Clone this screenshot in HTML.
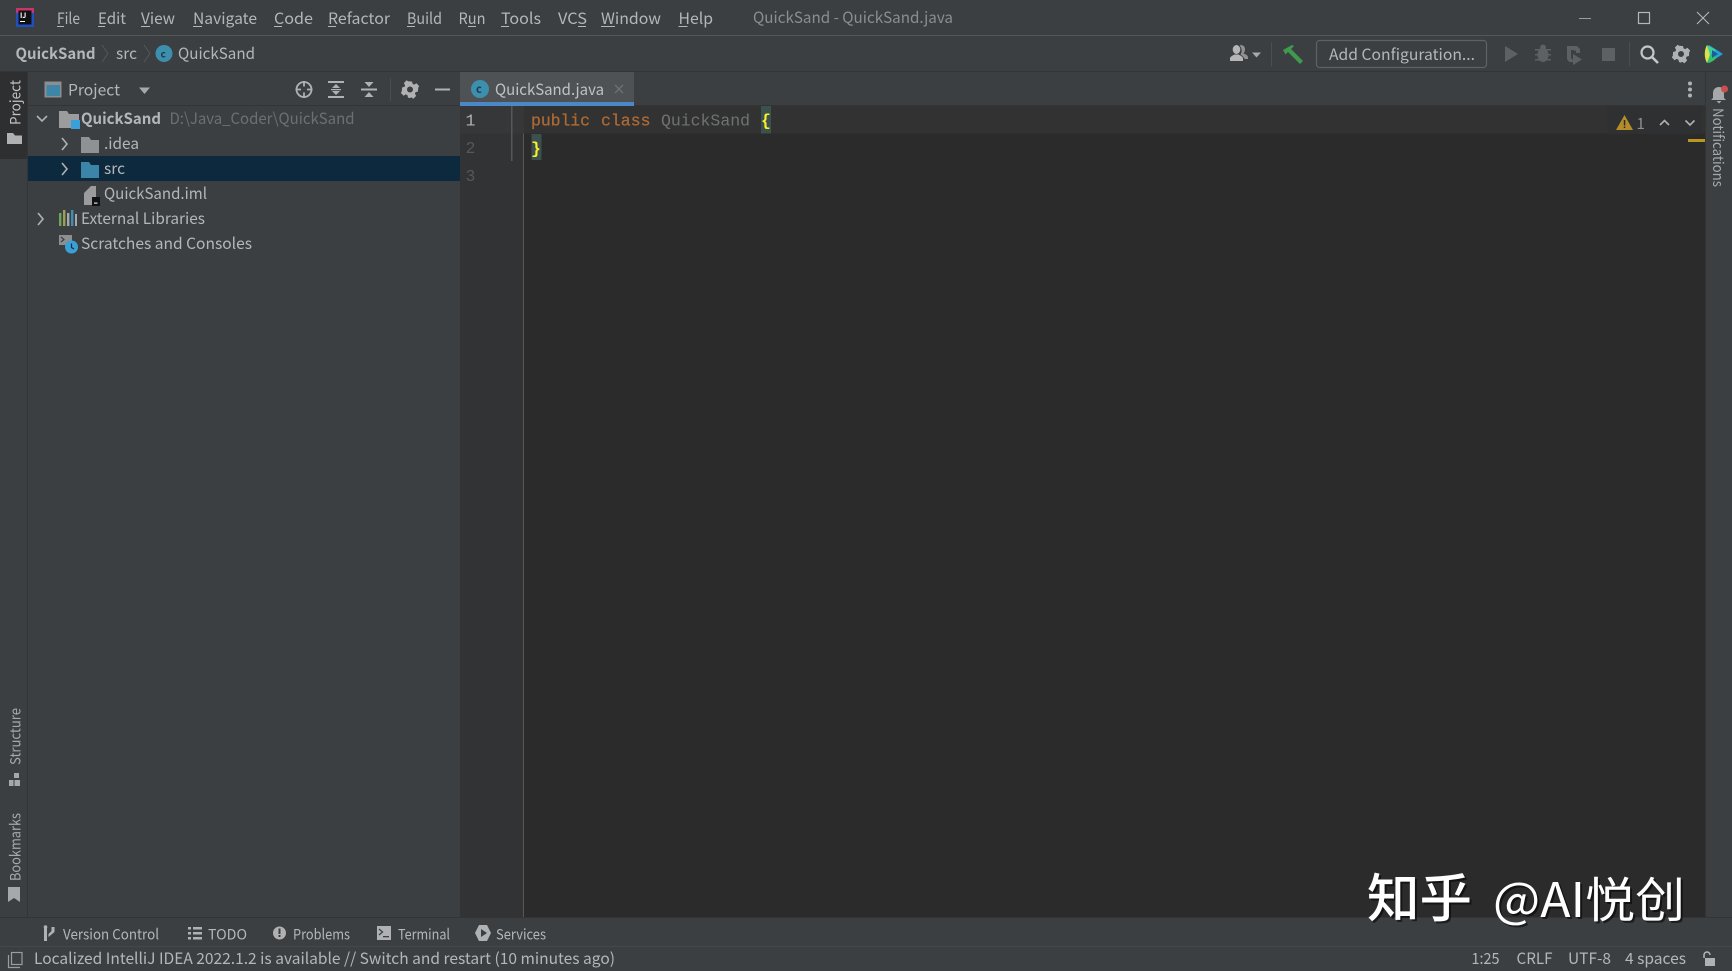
<!DOCTYPE html>
<html lang="en">
<head>
<meta charset="utf-8">
<title>QuickSand - QuickSand.java</title>
<style>
html,body{margin:0;padding:0;width:1732px;height:971px;overflow:hidden;background:#3c3f41}
svg{display:block}
text{font-family:"Noto Sans CJK SC","Liberation Sans",sans-serif;font-size:15.5px;fill:#b4b6b8}
.m{font-family:"Liberation Mono",monospace;font-size:16.5px}
.s{font-size:14.5px}
.g{fill:#a6a8aa}
.b{font-weight:700}
.ic{fill:#afb1b3}
.dim{fill:#5d6163}
.ln{stroke:#afb1b3;fill:none;stroke-width:1.6}
</style>
</head>
<body>
<svg width="1732" height="971" viewBox="0 0 1732 971" xmlns="http://www.w3.org/2000/svg">
<defs>
<g id="gear"><path fill="#afb1b3" fill-rule="evenodd" d="M-2-8h4l.6 2.4 1.7.7 2.1-1.3 2.8 2.8-1.3 2.1.7 1.7L8-2V2l-2.4.6-.7 1.7 1.3 2.1-2.8 2.8-2.1-1.3-1.7.7L-2 8h-0V8l-.6-2.4-1.7-.7-2.1 1.3-2.8-2.8 1.3-2.1-.7-1.7L-8 2V-2l2.4-.6.7-1.7-1.3-2.1 2.8-2.8 2.1 1.3 1.7-.7zM0-3a3 3 0 1 0 0 6 3 3 0 0 0 0-6z"/></g>
<g id="folder"><path d="M0 0h8l2 3h8v13H0z"/></g>
</defs>

<!-- base -->
<rect width="1732" height="971" fill="#3c3f41"/>
<rect x="0" y="35" width="1732" height="1" fill="#54575a"/>
<rect x="0" y="71" width="1732" height="1" fill="#323436"/>

<!-- title bar -->
<rect x="16" y="8" width="18" height="19" fill="#1f4fc0"/>
<rect x="16" y="8" width="18" height="5" fill="#c8356a"/>
<rect x="18.500" y="10.500" width="13" height="14" fill="#111"/>
<text x="20" y="18" style="font-size:7px;fill:#fff;font-weight:700">IJ</text>
<rect x="20" y="21" width="5" height="1" fill="#fff"/>
<g>
<text x="57" y="24" textLength="23" lengthAdjust="spacingAndGlyphs">File</text>
<text x="98" y="24" textLength="28" lengthAdjust="spacingAndGlyphs">Edit</text>
<text x="141" y="24" textLength="34" lengthAdjust="spacingAndGlyphs">View</text>
<text x="193" y="24" textLength="64" lengthAdjust="spacingAndGlyphs">Navigate</text>
<text x="274" y="24" textLength="39" lengthAdjust="spacingAndGlyphs">Code</text>
<text x="328" y="24" textLength="62" lengthAdjust="spacingAndGlyphs">Refactor</text>
<text x="407" y="24" textLength="35" lengthAdjust="spacingAndGlyphs">Build</text>
<text x="458.500" y="24" textLength="27" lengthAdjust="spacingAndGlyphs">Run</text>
<text x="501" y="24" textLength="40" lengthAdjust="spacingAndGlyphs">Tools</text>
<text x="558" y="24" textLength="29" lengthAdjust="spacingAndGlyphs">VCS</text>
<text x="601" y="24" textLength="60" lengthAdjust="spacingAndGlyphs">Window</text>
<text x="678.500" y="24" textLength="34.500" lengthAdjust="spacingAndGlyphs">Help</text>
<text x="753" y="23" textLength="200" lengthAdjust="spacingAndGlyphs" style="fill:#8b8d8f">QuickSand - QuickSand.java</text>
</g>
<g fill="#b4b6b8">
<rect x="57" y="26" width="7" height="1"/><rect x="98" y="26" width="7" height="1"/><rect x="141" y="26" width="9" height="1"/><rect x="193" y="26" width="9" height="1"/><rect x="274" y="26" width="8" height="1"/><rect x="328" y="26" width="8" height="1"/><rect x="407" y="26" width="8" height="1"/><rect x="468" y="26" width="8" height="1"/><rect x="501" y="26" width="8" height="1"/><rect x="578" y="26" width="8" height="1"/><rect x="601" y="26" width="14" height="1"/><rect x="678.500" y="26" width="9" height="1"/>
</g>
<rect x="1579" y="18" width="12" height="1" fill="#9a9c9e"/>
<rect x="1638.500" y="12.500" width="11" height="11" fill="none" stroke="#b4b6b8" stroke-width="1.200"/>
<path d="M1697 12l12 12M1709 12l-12 12" stroke="#b4b6b8" stroke-width="1.100" fill="none"/>

<!-- navigation bar -->
<text x="15.500" y="59" class="b" textLength="80" lengthAdjust="spacingAndGlyphs">QuickSand</text>
<path d="M102 45l6 8.500-6 8.500" class="ln" style="stroke:#55585a;stroke-width:1"/>
<text x="116" y="59" textLength="21" lengthAdjust="spacingAndGlyphs">src</text>
<path d="M144 45l6 8.500-6 8.500" class="ln" style="stroke:#55585a;stroke-width:1"/>
<circle cx="164" cy="53.500" r="8.500" fill="#3d8fae"/>
<text x="160.500" y="57.500" style="font-size:10px;fill:#1e3d4d;font-weight:700">c</text>
<text x="178" y="59" textLength="77" lengthAdjust="spacingAndGlyphs">QuickSand</text>

<!-- user icon -->
<path d="M1241 45a4 4 0 0 1 4 4.500c0 1.500-.7 3-1.500 4 2 .8 4.500 1.500 4.500 4v1.500h-3.500c-.5-2-2.500-3.500-4-4.500 1-1.500 1.500-3.500 1-5.500-.2-1-.7-2-1.500-3 .2-.8.5-1 1-1.500z" fill="#8f9193"/>
<ellipse cx="1236.500" cy="49.500" rx="3.800" ry="4.500" fill="#b4b6b8"/>
<path d="M1230 61v-2.500c0-2 3-3 4.500-4h4c1.500 1 4.500 2 4.500 4v2.500z" fill="#b4b6b8"/>
<path d="M1252 52.500h9l-4.500 5z" fill="#a6a8aa"/>
<rect x="1271" y="42" width="1" height="24" fill="#4b4e50"/>
<!-- hammer -->
<path d="M1283 50l9-5 2 1-3 3 12 12-3 3-12-12-2.500 2.500z" fill="#3f9a4f"/>
<!-- add config -->
<rect x="1316.500" y="40.500" width="170" height="27" rx="3" fill="#3c3f41" stroke="#5e6265" stroke-width="1.200"/>
<text x="1329" y="60" textLength="146" lengthAdjust="spacingAndGlyphs">Add Configuration...</text>
<!-- disabled run icons -->
<path d="M1505 46l13 8-13 8z" fill="#5d6163"/>
<g fill="#5d6163"><ellipse cx="1543" cy="55" rx="5.500" ry="7"/><circle cx="1543" cy="47.500" r="3"/><path d="M1535 49h16v1.500h-16zM1535 54h16v1.500h-16zM1535 59h16v1.500h-16z"/></g>
<path d="M1567 46h10l3 3v4h-4v-2l-3-1h-2v8l2 2v2h-4l-2-3zM1573 54l9 5.500-9 5.500z" fill="#5d6163"/>
<rect x="1602" y="48" width="13" height="13" fill="#5d6163"/>
<rect x="1629" y="42" width="1" height="24" fill="#4b4e50"/>
<!-- search -->
<circle cx="1647.500" cy="52.500" r="6" fill="none" stroke="#c4c6c8" stroke-width="2.200"/>
<path d="M1652 57l6 6" stroke="#c4c6c8" stroke-width="2.600"/>
<use href="#gear" x="1681" y="54"/>
<!-- logo -->
<path d="M1709 45l14 9-14 9-3-8z" fill="#22a0e0"/>
<path d="M1707 45l9 5-6 5z" fill="#3dcf9a"/>
<path d="M1707 45c-3 5-3 13 0 18l3-8z" fill="#d9e24c"/>
<path d="M1707 63c4 0 8-3 10-6l-7-2z" fill="#35c06a"/>
<path d="M1712 50l6 4-6 4z" fill="#1a5f90"/>

<!-- left stripe -->
<rect x="0" y="72" width="27" height="87" fill="#2d2f30"/>
<rect x="27" y="72" width="1" height="845" fill="#323436"/>
<text x="0" y="0" class="s" transform="translate(20.500,125) rotate(-90)" textLength="45" lengthAdjust="spacingAndGlyphs" style="fill:#c0c2c4">Project</text>
<path d="M7 133h6l2 2.500h7V144H7z" fill="#afb1b3"/>
<text x="0" y="0" class="s g" transform="translate(20.500,765) rotate(-90)" textLength="57" lengthAdjust="spacingAndGlyphs">Structure</text>
<path d="M14 773h5v5h-5zM9 780h4.500v6H9zM14.500 780H20v6h-5.500z" fill="#a6a8aa"/>
<text x="0" y="0" class="s g" transform="translate(20.500,881) rotate(-90)" textLength="68" lengthAdjust="spacingAndGlyphs">Bookmarks</text>
<path d="M8 887h12v15l-6-4-6 4z" fill="#a6a8aa"/>

<!-- project header -->
<rect x="44.500" y="81.500" width="17" height="16" fill="#8c8e90"/>
<rect x="46.500" y="85" width="13.500" height="11" fill="#3d86a8"/>
<text x="68" y="95.500" textLength="52" lengthAdjust="spacingAndGlyphs">Project</text>
<path d="M139 87.500h11l-5.500 6.500z" fill="#a6a8aa"/>
<circle cx="304" cy="89.500" r="7.500" fill="none" stroke="#afb1b3" stroke-width="1.800"/>
<path d="M304 81v5.500M304 92.500V98M295.500 89.500h5.500M307 89.500h5.500" stroke="#afb1b3" stroke-width="1.800"/>
<g fill="#afb1b3"><rect x="328" y="81" width="16" height="2"/><rect x="328" y="96" width="16" height="2"/><path d="M336 84l-4 4h8zM336 95l-4-4h8z"/><rect x="331" y="89" width="10" height="1.200"/></g>
<g fill="#afb1b3"><rect x="361" y="88.500" width="16" height="2"/><path d="M369 87l-4.500-5h9zM369 92l-4.500 5h9z"/></g>
<rect x="390" y="78" width="1" height="23" fill="#4b4e50"/>
<use href="#gear" x="410" y="89.500"/>
<rect x="435" y="88.500" width="15" height="2" fill="#afb1b3"/>
<rect x="28" y="105" width="432" height="1" fill="#323436"/>

<!-- tree -->
<rect x="28" y="156" width="432" height="25" fill="#0d293e"/>
<path d="M37 116l5 5 5-5" class="ln"/>
<path d="M62 138l5 6-5 6" class="ln"/>
<path d="M62 163l5 6-5 6" class="ln"/>
<path d="M38 213l5 6-5 6" class="ln"/>
<path d="M59 111h8l2 3h10v14H59z" fill="#9a9c9e"/>
<rect x="71" y="120" width="9" height="9" fill="#3aa0d8"/>
<text x="81" y="124" class="b" textLength="80" lengthAdjust="spacingAndGlyphs">QuickSand</text>
<text x="169.500" y="124" textLength="185" lengthAdjust="spacingAndGlyphs" style="fill:#6d7072">D:\Java_Coder\QuickSand</text>
<g fill="#8f9294" transform="translate(81,137)"><use href="#folder"/></g>
<text x="104" y="149" textLength="35" lengthAdjust="spacingAndGlyphs">.idea</text>
<g fill="#3a85a8" transform="translate(81,162)"><use href="#folder"/></g>
<text x="104" y="174" textLength="21" lengthAdjust="spacingAndGlyphs">src</text>
<path d="M84 193l7-7h5v14h-3v5h-9z" fill="#9a9c9e"/>
<rect x="92" y="197" width="8" height="9" fill="#111"/><rect x="94" y="202.500" width="3.500" height="1.200" fill="#ddd"/>
<text x="104" y="199" textLength="103" lengthAdjust="spacingAndGlyphs">QuickSand.iml</text>
<g><rect x="59" y="213" width="2.400" height="13" fill="#6fa55a"/><rect x="63" y="210" width="2.400" height="16" fill="#9aa05a"/><rect x="67" y="213" width="2.400" height="13" fill="#a6a8aa"/><rect x="71" y="210" width="2.400" height="16" fill="#3f8fb8"/><rect x="75" y="214" width="2" height="12" fill="#a6a8aa"/></g>
<text x="81" y="224" textLength="124" lengthAdjust="spacingAndGlyphs">External Libraries</text>
<rect x="59" y="235" width="13" height="10" fill="#8c8e90"/>
<path d="M61 237l3 2.500-3 2.500" stroke="#3c3f41" fill="none" stroke-width="1.200"/>
<circle cx="71.500" cy="247" r="6.500" fill="#3aa0d8"/>
<path d="M71.500 243.500v4l2.500 1.500" stroke="#0f2f44" fill="none" stroke-width="1.200"/>
<text x="81" y="249" textLength="171" lengthAdjust="spacingAndGlyphs">Scratches and Consoles</text>

<!-- editor -->
<rect x="460" y="106" width="1245" height="811" fill="#2b2b2b"/>
<rect x="460" y="106" width="64" height="811" fill="#313335"/>
<rect x="523" y="106" width="1" height="811" fill="#555759"/>
<rect x="524" y="106" width="1181" height="27.500" fill="#323232"/>
<rect x="460" y="106" width="64" height="27.500" fill="#353739"/>
<rect x="460" y="72" width="1245" height="34" fill="#3c3f41"/>
<rect x="460" y="105" width="1245" height="1" fill="#323436"/>
<!-- tab -->
<rect x="460" y="72" width="174" height="30" fill="#4e5254"/>
<rect x="460" y="102" width="174" height="4" fill="#4a88c7"/>
<circle cx="480" cy="89" r="9" fill="#3d8fae"/>
<text x="476" y="93" style="font-size:11px;fill:#1e3d4d;font-weight:700">c</text>
<text x="495" y="95" textLength="109" lengthAdjust="spacingAndGlyphs" style="fill:#c0c2c4">QuickSand.java</text>
<path d="M615 85l8 8M623 85l-8 8" stroke="#6e7173" stroke-width="1.300"/>
<circle cx="1690" cy="83.500" r="2" fill="#afb1b3"/><circle cx="1690" cy="89.500" r="2" fill="#afb1b3"/><circle cx="1690" cy="95.500" r="2" fill="#afb1b3"/>
<!-- gutter -->
<text x="465.500" y="125.500" class="m" style="fill:#b0b2b4">1</text>
<text x="465.500" y="153" class="m" style="fill:#55585a">2</text>
<text x="465.500" y="181" class="m" style="fill:#55585a">3</text>
<rect x="511" y="106" width="1.500" height="55" fill="#55585a"/>
<!-- code -->
<text x="531" y="125.700" class="m" style="fill:#ad6a33;stroke:#ad6a33;stroke-width:.25" textLength="59" lengthAdjust="spacing">public</text>
<text x="601" y="125.700" class="m" style="fill:#ad6a33;stroke:#ad6a33;stroke-width:.25" textLength="49.500" lengthAdjust="spacing">class</text>
<text x="661" y="125.700" class="m" style="fill:#6f7173" textLength="89" lengthAdjust="spacing">QuickSand</text>
<rect x="761" y="106" width="10" height="27.500" fill="#3b514d"/>
<text x="761" y="125.700" class="m" style="fill:#ffef28;font-weight:700">{</text>
<rect x="531.500" y="134" width="10" height="26" fill="#3b514d"/>
<text x="531" y="153.500" class="m" style="fill:#ffef28;font-weight:700">}</text>
<!-- inspections -->
<rect x="1607" y="106" width="95" height="28" fill="#2f3031"/>
<path d="M1624.500 115l8.500 15h-17z" fill="#b58c28"/>
<rect x="1623.800" y="120" width="1.500" height="5.500" fill="#2b2b2b"/><rect x="1623.800" y="126.500" width="1.500" height="1.500" fill="#2b2b2b"/>
<text x="1636.500" y="129" style="font-size:15px;fill:#909294">1</text>
<path d="M1660 125l4.500-4.500 4.500 4.500" class="ln"/>
<path d="M1685.500 120.500l4.500 4.500 4.500-4.500" class="ln"/>
<rect x="1688" y="139" width="17" height="3" fill="#b8981f"/>

<!-- right stripe -->
<rect x="1705" y="72" width="27" height="845" fill="#3c3f41"/>
<rect x="1705" y="72" width="1" height="845" fill="#323436"/>
<path d="M1719 87c4 0 5 3 5 6v5l2 2h-15l2-2v-5c0-3 2-6 6-6zM1716.500 101h5l-2.500 2.500z" fill="#a6a8aa"/>
<circle cx="1724.500" cy="89" r="3.500" fill="#c9504f"/>
<text x="0" y="0" class="s g" transform="translate(1713,108) rotate(90)" textLength="79" lengthAdjust="spacingAndGlyphs">Notifications</text>

<!-- bottom tool bar -->
<rect x="0" y="917" width="1732" height="1" fill="#323436"/>
<rect x="0" y="946" width="1732" height="1" fill="#45484a"/>
<g class="ic">
<path d="M44 927h3v14h-3zM51.500 927h3v5l-6 5v-3l3-3z" fill="#afb1b3"/>
<circle cx="45.500" cy="927" r="1.800" fill="#afb1b3"/>
<path d="M188 927h3v2.500h-3zM193 927h9v2.500h-9zM188 932h3v2.500h-3zM193 932h9v2.500h-9zM188 937h3v2.500h-3zM193 937h9v2.500h-9z" fill="#afb1b3"/>
<circle cx="279.500" cy="933" r="6.500" fill="#afb1b3"/>
<rect x="278.500" y="928.500" width="2" height="5.500" fill="#3c3f41"/><rect x="278.500" y="935" width="2" height="2" fill="#3c3f41"/>
<rect x="377" y="926" width="14" height="14" fill="#afb1b3"/>
<path d="M379 929l3.500 3-3.500 3" stroke="#3c3f41" fill="none" stroke-width="1.300"/><rect x="383" y="936" width="6" height="1.300" fill="#3c3f41"/>
<path d="M479 925h8l4 8-4 8h-8l-4-8z" fill="#afb1b3"/>
<path d="M481 929l6 4-6 4z" fill="#3c3f41"/>
</g>
<text x="63" y="939.500" class="s" textLength="96" lengthAdjust="spacingAndGlyphs">Version Control</text>
<text x="208" y="939.500" class="s" textLength="39" lengthAdjust="spacingAndGlyphs">TODO</text>
<text x="293" y="939.500" class="s" textLength="57" lengthAdjust="spacingAndGlyphs">Problems</text>
<text x="398" y="939.500" class="s" textLength="52" lengthAdjust="spacingAndGlyphs">Terminal</text>
<text x="496" y="939.500" class="s" textLength="50" lengthAdjust="spacingAndGlyphs">Services</text>

<!-- status bar -->
<rect x="11.500" y="952.500" width="10.500" height="12" fill="none" stroke="#9a9c9e" stroke-width="1.200"/>
<path d="M8.500 955v12.500H20" fill="none" stroke="#9a9c9e" stroke-width="1.200"/>
<text x="34" y="964" textLength="581" lengthAdjust="spacingAndGlyphs">Localized IntelliJ IDEA 2022.1.2 is available // Switch and restart (10 minutes ago)</text>
<text x="1471.500" y="964" textLength="28" lengthAdjust="spacingAndGlyphs">1:25</text>
<text x="1516.500" y="964" textLength="36" lengthAdjust="spacingAndGlyphs">CRLF</text>
<text x="1568" y="964" textLength="43" lengthAdjust="spacingAndGlyphs">UTF-8</text>
<text x="1625" y="964" textLength="61" lengthAdjust="spacingAndGlyphs">4 spaces</text>
<path d="M1704 958v-3a3 3 0 0 1 6 0" fill="none" stroke="#b4b6b8" stroke-width="1.500"/>
<rect x="1705" y="958" width="10" height="8" fill="#afb1b3"/>

<!-- watermark -->
<g>
<text x="1369" y="919" textLength="105" lengthAdjust="spacingAndGlyphs" style="font-size:52px;fill:#000;opacity:.55;font-weight:500">知乎</text>
<text x="1495" y="919" textLength="192" lengthAdjust="spacingAndGlyphs" style="font-size:48px;fill:#000;opacity:.55;font-weight:400">@AI悦创</text>
<text x="1367" y="917" textLength="105" lengthAdjust="spacingAndGlyphs" style="font-size:52px;fill:#fff;font-weight:500">知乎</text>
<text x="1493" y="917" textLength="192" lengthAdjust="spacingAndGlyphs" style="font-size:48px;fill:#fff;font-weight:400">@AI悦创</text>
</g>
</svg>
</body>
</html>
